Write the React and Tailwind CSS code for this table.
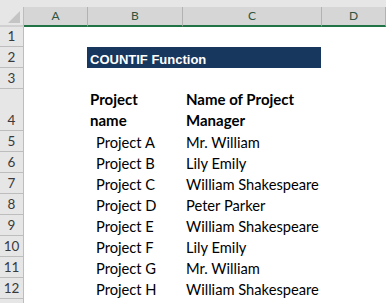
import React from 'react';

const cols = ['A', 'B', 'C', 'D'];

const rows = [
  { n: 1 },
  { n: 2, title: 'COUNTIF Function' },
  { n: 3 },
  { n: 4, head: true, b: ['Project', 'name'], c: ['Name of Project', 'Manager'] },
  { n: 5, b: 'Project A', c: 'Mr. William' },
  { n: 6, b: 'Project B', c: 'Lily Emily' },
  { n: 7, b: 'Project C', c: 'William Shakespeare' },
  { n: 8, b: 'Project D', c: 'Peter Parker' },
  { n: 9, b: 'Project E', c: 'William Shakespeare' },
  { n: 10, b: 'Project F', c: 'Lily Emily' },
  { n: 11, b: 'Project G', c: 'Mr. William' },
  { n: 12, b: 'Project H', c: 'William Shakespeare' },
  { n: 13, hideNum: true },
];

const grid = 'grid grid-cols-[24px_63px_95px_139px_65px]';

const App = () => {
  return (
    <div className="w-[386px] h-[303px] overflow-hidden bg-white font-['Lato',sans-serif] text-black">
      {/* strip above the headers */}
      <div className="h-[7px] bg-[#e6e6e6]" />

      {/* column headers */}
      <div className={`${grid} h-[19px]`}>
        <div className="relative bg-[#e6e6e6] border-r border-[#bdbdbd] border-b-2 border-b-[#d0d0d0]">
          <div className="absolute right-[3px] bottom-[2px] w-0 h-0 border-l-[12px] border-l-transparent border-b-[12px] border-b-[#c4c4c4]" />
        </div>
        {cols.map((c, i) => (
          <div
            key={c}
            className={`flex items-center justify-center bg-[#d6d6d6] border-b-2 border-b-[#217346] text-[12px] text-[#2f5440] ${i > 0 ? 'border-l border-l-[#b2b2b2]' : ''} ${c === 'D' ? 'border-r border-r-[#b2b2b2]' : ''}`}
          >
            {c}
          </div>
        ))}
      </div>

      {/* sheet rows */}
      {rows.map((r) => (
        <div key={r.n} className={`${grid} ${r.head ? 'h-[42px]' : 'h-[21px]'}`}>
          <div className="flex items-end justify-center bg-[#e6e6e6] border-r border-b border-[#bdbdbd] text-[13.5px] leading-[19px] text-[#3a3a3a]">
            {r.hideNum ? '' : r.n}
          </div>
          <div />
          {r.title ? (
            <div className="col-span-2 flex items-end bg-[#17375e] pl-[3px] font-['Liberation_Sans',sans-serif] font-bold text-[13px] leading-[17px] text-white">
              {r.title}
            </div>
          ) : r.head ? (
            <>
              <div className="flex flex-col justify-end pl-[3px] font-bold text-[15px] leading-[21px]">
                {r.b.map((t) => (
                  <span key={t}>{t}</span>
                ))}
              </div>
              <div className="flex flex-col justify-end pl-[4px] font-bold text-[15px] leading-[21px]">
                {r.c.map((t) => (
                  <span key={t}>{t}</span>
                ))}
              </div>
            </>
          ) : r.b ? (
            <>
              <div className="flex items-end pl-[9px] text-[14.7px] leading-[20px] whitespace-nowrap">{r.b}</div>
              <div className="flex items-end pl-[4px] text-[14.7px] leading-[20px] whitespace-nowrap">{r.c}</div>
            </>
          ) : (
            <div className="col-span-2" />
          )}
          <div />
        </div>
      ))}
    </div>
  );
};

export default App;
